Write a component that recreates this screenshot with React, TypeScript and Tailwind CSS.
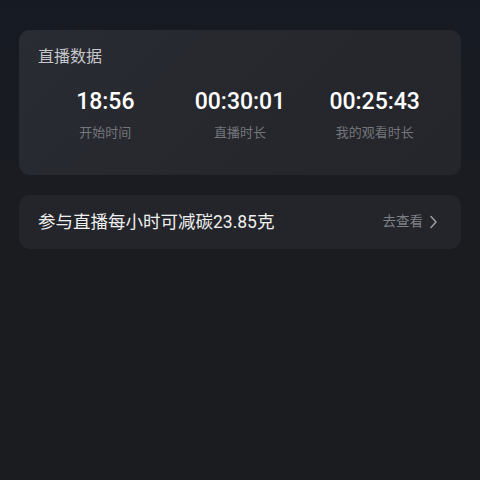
export default function App() {
    const stats = [
        { value: "18:56", label: "开始时间" },
        { value: "00:30:01", label: "直播时长" },
        { value: "00:25:43", label: "我的观看时长" },
    ]

    return (
        <div
            className="w-[480px] h-[480px] overflow-hidden bg-[linear-gradient(180deg,#161a22_0px,#1a1c22_180px,#1b1c20_260px)] px-[19px] pt-[30px]"
            style={{ fontFamily: '"Liberation Sans", "Noto Sans CJK SC", sans-serif' }}
        >
            {/* live data card */}
            <div className="rounded-[11px] bg-[linear-gradient(135deg,#2a2c33,#25272d_60%,#24262c)] px-[19px] pt-[16px] pb-[33px]">
                <div className="text-[16px] leading-[22px] text-[#c6c7cb]">直播数据</div>
                <div className="mt-[20px] grid grid-cols-3">
                    {stats.map((s) => (
                        <div key={s.label} className="flex flex-col items-center">
                            <div className="font-['Roboto',sans-serif] text-[23px] leading-[28px] font-medium text-white">{s.value}</div>
                            <div className="mt-[8px] text-[13px] leading-[18px] text-[#74767b]">{s.label}</div>
                        </div>
                    ))}
                </div>
            </div>

            {/* carbon row */}
            <div className="mt-[20px] h-[54px] rounded-[11px] bg-[#23252b] pl-[19px] pr-[23px] flex items-center justify-between">
                <div className="text-[17.5px] text-[#efefef]">参与直播每小时可减碳<span className="font-['Roboto',sans-serif]">23.85</span>克</div>
                <div className="flex items-center gap-[6px] text-[13.5px] text-[#7f8086]">
                    <span>去查看</span>
                    <svg width="9" height="14" viewBox="0 0 9 14" fill="none">
                        <path d="M2 1.5L7 7L2 12.5" stroke="#9a9ba0" strokeWidth="1.6" strokeLinecap="round" strokeLinejoin="round" />
                    </svg>
                </div>
            </div>
        </div>
    )
}
